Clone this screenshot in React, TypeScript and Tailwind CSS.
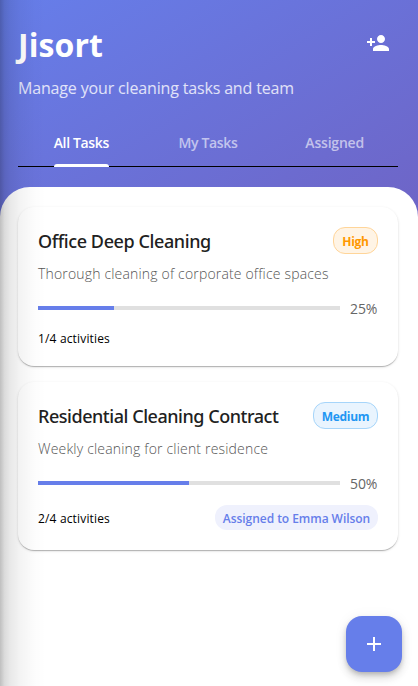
import React from "react";

type Task = {
  title: string;
  titleClass: string;
  description: string;
  descriptionClass: string;
  priority: string;
  priorityClass: string;
  progress: number;
  activities: string;
  assignee?: string;
};

const tasks: Task[] = [
  {
    title: "Office Deep Cleaning",
    titleClass: "tracking-[-0.4px]",
    description: "Thorough cleaning of corporate office spaces",
    descriptionClass: "tracking-[0.17px]",
    priority: "High",
    priorityClass: "w-[45px] border-[#ffd599] bg-[#fff4e5] text-[#ff9800]",
    progress: 25,
    activities: "1/4 activities",
  },
  {
    title: "Residential Cleaning Contract",
    titleClass: "tracking-[-0.46px]",
    description: "Weekly cleaning for client residence",
    descriptionClass: "tracking-[0.18px]",
    priority: "Medium",
    priorityClass: "w-[65px] border-[#a6d5fa] bg-[#e9f4fe] text-[#2196f3]",
    progress: 50,
    activities: "2/4 activities",
    assignee: "Assigned to Emma Wilson",
  },
];

function TaskCard({ task }: { task: Task }) {
  return (
    <article className="rounded-2xl bg-white px-5 pt-5 pb-5 shadow-[0_2px_1px_-1px_rgba(0,0,0,0.14),0_1px_1px_rgba(0,0,0,0.12),0_1px_3px_rgba(0,0,0,0.12)]">
      <div className="flex h-[27px] items-center justify-between">
        <h2 className={`font-['Noto_Sans','Open_Sans',sans-serif] text-[18px] leading-6 font-medium whitespace-nowrap text-[#212121] ${task.titleClass}`}>
          {task.title}
        </h2>
        <span
          className={`flex h-[27px] items-center justify-center rounded-xl border pt-0.5 text-[12px] leading-4 font-bold tracking-[-0.3px] ${task.priorityClass}`}
        >
          {task.priority}
        </span>
      </div>
      <p className={`mt-2.5 whitespace-nowrap text-[14px] leading-5 font-light text-[#555] ${task.descriptionClass}`}>
        {task.description}
      </p>
      <div className="mt-[15px] flex h-[18px] items-center gap-2.5">
        <div className="h-1 flex-1 bg-[#e0e0e0]">
          <div className="h-full bg-[#667eea]" style={{ width: `${task.progress}%` }} />
        </div>
        <span className="w-7 pt-0.5 text-[14px] leading-4 tracking-[-0.1px] text-[#666]">{task.progress}%</span>
      </div>
      <div className={`flex items-center justify-between ${task.assignee ? "mt-3 h-[26px]" : "mt-[11px] h-[18px]"}`}>
        <span className="pt-1 text-[12px] leading-4 tracking-[0.16px] whitespace-nowrap text-black">{task.activities}</span>
        {task.assignee && (
          <span className="flex h-[25px] w-[163px] items-center justify-center rounded-xl bg-[#eff1fd] pt-1 text-[12px] font-semibold tracking-[-0.05px] whitespace-nowrap text-[#667eea]">
            {task.assignee}
          </span>
        )}
      </div>
    </article>
  );
}

export default function App() {
  return (
    <div className="relative flex h-[686px] w-[418px] flex-col overflow-hidden bg-[linear-gradient(148.65deg,#667eea,#764ba2)] font-['Open_Sans','Noto_Sans',sans-serif]">
      <header className="pt-[23px] pr-5 pl-[18px]">
        <div className="flex h-[43px] items-center justify-between">
          <h1 className="text-[32px] leading-[43px] font-bold tracking-[0.1px] text-white">Jisort</h1>
          <svg className="mr-2 mb-[3px] h-6 w-6" viewBox="0 0 24 24" fill="#fff" aria-hidden="true">
            <path d="M15 12c2.21 0 4-1.79 4-4s-1.79-4-4-4-4 1.79-4 4 1.79 4 4 4zm-9-2V7H4v3H1v2h3v3h2v-3h3v-2H6zm9 4c-2.67 0-8 1.34-8 4v2h16v-2c0-2.66-5.33-4-8-4z" />
          </svg>
        </div>
        <p className="mt-[11px] text-[16px] leading-[22px] tracking-[-0.16px] whitespace-nowrap text-white/80">
          Manage your cleaning tasks and team
        </p>
        <nav className="mt-5 grid h-12 grid-cols-3 border-b border-black text-[14px] leading-5 font-semibold tracking-[-0.35px] text-white/60">
          <div className="relative flex items-center justify-center pt-px">
            <span className="text-white">All Tasks</span>
            <i className="absolute -bottom-px left-9 h-[3px] w-[55px] rounded-t-[3px] bg-white" />
          </div>
          <div className="flex items-center justify-center pt-px">My Tasks</div>
          <div className="flex items-center justify-center pt-px tracking-[-0.2px]">Assigned</div>
        </nav>
      </header>
      <main className="mt-5 flex flex-1 flex-col gap-4 rounded-t-[30px] bg-white pt-5 pr-5 pl-[18px]">
        {tasks.map((task) => (
          <TaskCard key={task.title} task={task} />
        ))}
      </main>
      <button
        aria-label="Add task"
        className="absolute right-4 bottom-3.5 flex h-14 w-14 items-center justify-center rounded-2xl bg-[#667eea] shadow-[0_3px_5px_-1px_rgba(0,0,0,0.2),0_6px_10px_rgba(0,0,0,0.12),0_1px_14px_rgba(0,0,0,0.06)]"
      >
        <svg className="h-6 w-6" viewBox="0 0 24 24" fill="#fff" aria-hidden="true">
          <path d="M19 13h-6v6h-2v-6H5v-2h6V5h2v6h6v2z" />
        </svg>
      </button>
      <div className="pointer-events-none absolute inset-y-0 left-0 w-[46px] bg-[linear-gradient(90deg,rgba(0,0,0,0.25),rgba(0,0,0,0.14)_10%,rgba(0,0,0,0.09)_22%,rgba(0,0,0,0.045)_45%,rgba(0,0,0,0.012)_75%,transparent)]" />
    </div>
  );
}
